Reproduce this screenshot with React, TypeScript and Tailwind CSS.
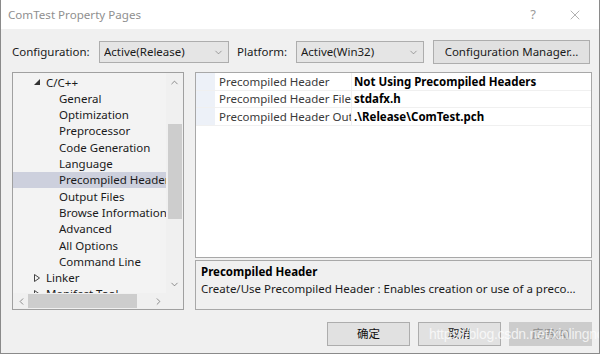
import React from 'react';
import { ChevronDown, ChevronUp, ChevronLeft, ChevronRight, X } from 'lucide-react';

const font = { fontFamily: '"Noto Sans", "Noto Sans CJK SC", sans-serif' };

const children = [
  'General',
  'Optimization',
  'Preprocessor',
  'Code Generation',
  'Language',
  'Precompiled Header',
  'Output Files',
  'Browse Information',
  'Advanced',
  'All Options',
  'Command Line',
];

const props = [
  { name: 'Precompiled Header', value: 'Not Using Precompiled Headers' },
  { name: 'Precompiled Header File', value: 'stdafx.h' },
  { name: 'Precompiled Header Output File', value: '.\\Release\\ComTest.pch' },
];

const Select: React.FC<{ value: string; width: string }> = ({ value, width }) => (
  <div className={`${width} h-[22px] bg-[#e5e5e5] border border-[#adadad] flex items-center pl-[4px] pr-[4px]`}>
    <span className="flex-1 truncate">{value}</span>
    <ChevronDown size={11} strokeWidth={1.2} className="text-[#606060]" />
  </div>
);

const Button: React.FC<{ label: string; disabled?: boolean }> = ({ label, disabled }) => (
  <div
    className={`w-[83px] h-[24px] flex items-center justify-center border ${
      disabled ? 'border-[#cccccc] bg-[#cccccc] text-[#8c8c8c]' : 'border-[#adadad] bg-[#e1e1e1] text-[#111]'
    }`}
  >
    {label}
  </div>
);

export default function App() {
  return (
    <div
      style={font}
      className="relative w-[600px] h-[354px] bg-[#f0f0f0] text-[11.5px] text-[#1a1a1a] flex flex-col overflow-hidden border-x border-b border-[#8a8a8a]"
    >
      {/* Title bar */}
      <div className="h-[29px] bg-white flex items-center pl-[7px] shrink-0">
        <span className="flex-1 text-[11.6px] text-[#8f8f8f]">ComTest Property Pages</span>
        <span className="w-[20px] text-center text-[13px] text-[#9a9a9a] mr-[24px]">?</span>
        <X size={16} strokeWidth={1} className="text-[#8a8a8a] mr-[16px]" />
      </div>

      {/* Configuration row */}
      <div className="flex items-center mt-[12px] pl-[11px] h-[22px]">
        <span className="w-[87px]">Configuration:</span>
        <Select value="Active(Release)" width="w-[130px]" />
        <span className="ml-[8px] w-[59px]">Platform:</span>
        <Select value="Active(Win32)" width="w-[128px]" />
        <div className="ml-[9px] w-[157px] h-[24px] bg-[#e1e1e1] border border-[#adadad] flex items-center justify-center">
          Configuration Manager...
        </div>
      </div>

      {/* Main area */}
      <div className="flex mt-[9px] pl-[11px] h-[238px]">
        {/* Tree */}
        <div className="w-[172px] h-full bg-[#f3f3f3] border border-[#a0a0a0] flex flex-col">
          <div className="flex flex-1 min-h-0">
            <div className="flex-1 overflow-hidden pt-[1px]">
              <div className="h-[16.3px] flex items-center pl-[21px] whitespace-nowrap">
                <svg width="6" height="6" viewBox="0 0 6 6" className="mr-[6px]">
                  <polygon points="6,0 6,6 0,6" fill="#333" />
                </svg>
                C/C++
              </div>
              {children.map((c) => (
                <div
                  key={c}
                  className={`h-[16.3px] flex items-center pl-[46px] whitespace-nowrap ${
                    c === 'Precompiled Header' ? 'bg-[#cdd0dd]' : ''
                  }`}
                >
                  {c}
                </div>
              ))}
              <div className="h-[16.3px] flex items-center pl-[21px] whitespace-nowrap">
                <svg width="6" height="8" viewBox="0 0 6 8" className="mr-[6px]">
                  <polygon points="0.5,0.5 5.5,4 0.5,7.5" fill="none" stroke="#444" strokeWidth="1" />
                </svg>
                Linker
              </div>
              <div className="h-[16.3px] flex items-center pl-[21px] whitespace-nowrap">
                <svg width="6" height="8" viewBox="0 0 6 8" className="mr-[6px]">
                  <polygon points="0.5,0.5 5.5,4 0.5,7.5" fill="none" stroke="#444" strokeWidth="1" />
                </svg>
                Manifest Tool
              </div>
            </div>
            {/* Vertical scrollbar */}
            <div className="w-[17px] bg-[#f0f0f0] flex flex-col items-center">
              <ChevronUp size={11} strokeWidth={1.5} className="text-[#606060] mt-[4px] mb-[36px]" />
              <div className="w-[14px] h-[95px] bg-[#cdcdcd]" />
              <div className="flex-1" />
              <ChevronDown size={11} strokeWidth={1.5} className="text-[#606060] mb-[3px]" />
            </div>
          </div>
          {/* Horizontal scrollbar */}
          <div className="h-[16px] flex items-center bg-[#f0f0f0]">
            <ChevronLeft size={11} strokeWidth={1.5} className="text-[#606060] ml-[3px] mr-[1px]" />
            <div className="w-[109px] h-[14px] bg-[#cdcdcd]" />
            <div className="flex-1" />
            <ChevronRight size={11} strokeWidth={1.5} className="text-[#606060] mr-[19px]" />
          </div>
        </div>

        {/* Right side */}
        <div className="ml-[11px] w-[397px] h-full flex flex-col">
          <div className="h-[186px] bg-white border border-[#a8a8a8]">
            {props.map((p) => (
              <div key={p.name} className="h-[17.6px] flex border-b border-[#f0f0f0]">
                <div className="w-[19px] bg-[#edf1f8]" />
                <div className="w-[137px] pl-[4px] overflow-hidden whitespace-nowrap text-[#3a3a3a] border-r border-[#f0f0f0] flex items-center">
                  {p.name}
                </div>
                <div className="flex-1 pl-[2px] font-bold text-black flex items-center whitespace-nowrap">
                  {p.value}
                </div>
              </div>
            ))}
          </div>
          <div className="mt-[2px] flex-1 border border-[#a8a8a8] pl-[5px] pt-[2px]">
            <div className="font-bold text-black leading-[17px]">Precompiled Header</div>
            <div className="leading-[17px] whitespace-nowrap">
              Create/Use Precompiled Header : Enables creation or use of a preco...
            </div>
          </div>
        </div>
      </div>

      {/* Buttons */}
      <div className="flex justify-end gap-[8px] mt-[12px] pr-[7px]">
        <Button label="确定" />
        <Button label="取消" />
        <Button label="应用(A)" disabled />
      </div>

      {/* Watermark */}
      <span
        className="absolute left-[428px] top-[324px] text-[14px] text-white/75 tracking-[-0.3px]"
        style={{ fontFamily: '"Liberation Sans", Arial, sans-serif' }}
      >
        https://blog.csdn.net/xinlingncut
      </span>
    </div>
  );
}
